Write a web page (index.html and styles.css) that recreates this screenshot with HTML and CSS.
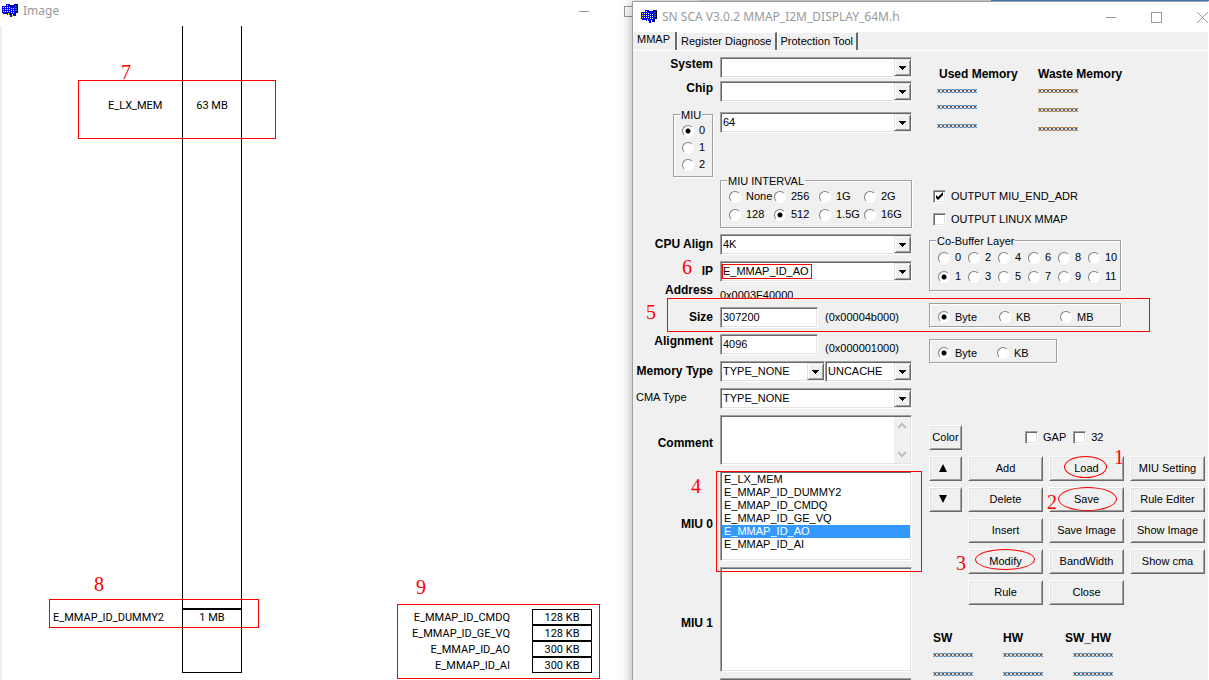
FILE: index.html
```html
<!DOCTYPE html>
<html lang="en">
<head>
<meta charset="utf-8">
<title>SN SCA</title>
<link rel="stylesheet" href="styles.css">
</head>
<body>
<svg class="defs" aria-hidden="true">
  <symbol id="app" viewBox="0 0 16 14" shape-rendering="crispEdges">
    <path fill="#000080" d="M4 0h4v1h4v-1h4v9h-2v3h-4v1H8v-2H6v-1H4v-1H0V2h4z"/>
    <path fill="#0000ff" d="M4 0h4v2h4v-1h2v8h-1v3h-2v-2h-1v3H8v-2H7v-1H6v1H5v-1H1V8H0V2h4z"/>
    <path fill="#fff" d="M3 3h1v1H3zM3 5h1v1H3zM3 7h1v1H3zM5 1h1v1H5zM5 3h1v1H5zM7 3h1v1H7zM5 5h1v1H5zM5 7h1v1H5zM9 4h1v1H9zM11 4h1v1h-1zM9 6h1v1H9zM11 6h1v1h-1zM9 8h1v1H9zM11 8h1v1h-1zM7 5h1v1H7zM7 7h1v1H7z"/>
    <path fill="#ff0" d="M1 3h1v1H1zM1 5h1v1H1zM1 7h1v1H1zM6 9h1v2H6zM10 10h1v3h-1z"/>
    <path fill="#008080" d="M13 2h2v1h-2zM13 4h2v1h-2zM13 6h2v1h-2z"/>
    <path d="M15 1h1v8h-1zM13 9h1v3h-1zM4 9h1v1H4zM8 2h1v1H8z"/>
  </symbol>
  <symbol id="down" viewBox="0 0 7 4" shape-rendering="crispEdges"><path d="M0 0h7v1H6v1H5v1H4v1H3V3H2V2H1V1H0z"/></symbol>
</svg>
<div class="desktop">
  <section class="window image-window">
    <header class="titlebar">
      <svg class="app-icon"><use href="#app"/></svg><span class="title">Image</span>
      <span class="min"></span><span class="max"></span>
    </header>
    <div class="canvas">
      <div class="memory-bar"><div class="slot big">63 MB</div><div class="slot small">1 MB</div></div>
      <span class="block-name name-lx">E_LX_MEM</span>
      <span class="block-name name-dummy">E_MMAP_ID_DUMMY2</span>
      <table class="blocks">
        <tr><th>E_MMAP_ID_CMDQ</th><td>128 KB</td></tr>
        <tr><th>E_MMAP_ID_GE_VQ</th><td>128 KB</td></tr>
        <tr><th>E_MMAP_ID_AO</th><td>300 KB</td></tr>
        <tr><th>E_MMAP_ID_AI</th><td>300 KB</td></tr>
      </table>
    </div>
  </section>

  <section class="window main-window">
    <header class="titlebar">
      <svg class="app-icon"><use href="#app"/></svg><span class="title">SN SCA V3.0.2 MMAP_I2M_DISPLAY_64M.h</span>
      <span class="controls"><span class="min"></span><span class="max"></span><svg class="close" viewBox="0 0 11 11"><path d="M0 0l11 11M11 0L0 11"/></svg></span>
    </header>
    <nav class="tabs">
      <button class="tab active">MMAP</button><button class="tab">Register Diagnose</button><button class="tab">Protection Tool</button>
    </nav>
    <form class="panel">
      <div class="form">
        <div class="row"><label for="system">System</label><span class="combo"><select id="system"><option></option></select><i><svg><use href="#down"/></svg></i></span></div>
        <div class="row chip"><label for="chip">Chip</label><span class="combo"><select id="chip"><option></option></select><i><svg><use href="#down"/></svg></i></span></div>
        <div class="row miu-row">
          <fieldset class="group miu"><legend>MIU</legend>
            <label><input type="radio" name="miu" checked>0</label>
            <label><input type="radio" name="miu">1</label>
            <label><input type="radio" name="miu">2</label>
          </fieldset>
          <span class="combo"><select aria-label="MIU size"><option>64</option></select><i><svg><use href="#down"/></svg></i></span>
        </div>
        <div class="row interval-row">
          <fieldset class="group interval"><legend>MIU INTERVAL</legend>
            <label><input type="radio" name="iv">None</label><label><input type="radio" name="iv">256</label><label><input type="radio" name="iv">1G</label><label><input type="radio" name="iv">2G</label>
            <label><input type="radio" name="iv">128</label><label><input type="radio" name="iv" checked>512</label><label><input type="radio" name="iv">1.5G</label><label><input type="radio" name="iv">16G</label>
          </fieldset>
        </div>
        <div class="row middle"><label for="cpu">CPU Align</label><span class="combo"><select id="cpu"><option>4K</option></select><i><svg><use href="#down"/></svg></i></span></div>
        <div class="row middle"><label for="ip">IP</label><span class="combo"><select id="ip"><option>E_MMAP_ID_AO</option></select><i><svg><use href="#down"/></svg></i></span></div>
        <div class="row address"><label for="address">Address</label><output id="address">0x0003F40000</output></div>
        <div class="row middle size"><label for="size">Size</label><input class="text" id="size" value="307200"><span class="hex">(0x00004b000)</span></div>
        <div class="row"><label for="align">Alignment</label><input class="text" id="align" value="4096"><span class="hex low">(0x000001000)</span></div>
        <div class="row middle"><label for="mem">Memory Type</label><span class="combo"><select id="mem"><option>TYPE_NONE</option></select><i><svg><use href="#down"/></svg></i></span><span class="combo cache"><select aria-label="Cache"><option>UNCACHE</option></select><i><svg><use href="#down"/></svg></i></span></div>
        <div class="row"><label class="plain" for="cma">CMA Type</label><span class="combo"><select id="cma"><option>TYPE_NONE</option></select><i><svg><use href="#down"/></svg></i></span></div>
        <div class="row comment"><label for="comment">Comment</label><span class="memo"><textarea id="comment"></textarea><span class="scroll"><svg viewBox="0 0 8 7"><path d="M0 6l4-4 4 4"/></svg><svg viewBox="0 0 8 7"><path d="M0 1l4 4 4-4"/></svg></span></span></div>
        <div class="row list-row"><span class="list-name" id="miu0">MIU 0</span><ul class="list" aria-labelledby="miu0"><li>E_LX_MEM</li><li>E_MMAP_ID_DUMMY2</li><li>E_MMAP_ID_CMDQ</li><li>E_MMAP_ID_GE_VQ</li><li class="selected">E_MMAP_ID_AO</li><li>E_MMAP_ID_AI</li></ul></div>
        <div class="row list-row tall"><span class="list-name" id="miu1">MIU 1</span><ul class="list" aria-labelledby="miu1"></ul></div>
        <div class="row list-row"><span class="list-name"></span><ul class="list"></ul></div>
      </div>
      <div class="side">
        <div class="usage">
          <div class="used"><b>Used Memory</b><span>xxxxxxxxxx</span><span>xxxxxxxxxx</span><span>xxxxxxxxxx</span></div>
          <div class="waste"><b>Waste Memory</b><span>xxxxxxxxxx</span><span>xxxxxxxxxx</span><span>xxxxxxxxxx</span></div>
        </div>
        <div class="outputs">
          <label><input type="checkbox" checked>OUTPUT MIU_END_ADR</label>
          <label><input type="checkbox">OUTPUT LINUX MMAP</label>
        </div>
        <fieldset class="group layer"><legend>Co-Buffer Layer</legend>
          <label><input type="radio" name="cb">0</label><label><input type="radio" name="cb">2</label><label><input type="radio" name="cb">4</label><label><input type="radio" name="cb">6</label><label><input type="radio" name="cb">8</label><label><input type="radio" name="cb">10</label>
          <label><input type="radio" name="cb" checked>1</label><label><input type="radio" name="cb">3</label><label><input type="radio" name="cb">5</label><label><input type="radio" name="cb">7</label><label><input type="radio" name="cb">9</label><label><input type="radio" name="cb">11</label>
        </fieldset>
        <fieldset class="group units"><label><input type="radio" name="u" checked>Byte</label><label><input type="radio" name="u">KB</label><label><input type="radio" name="u">MB</label></fieldset>
        <fieldset class="group units narrow"><label><input type="radio" name="a" checked>Byte</label><label><input type="radio" name="a">KB</label></fieldset>
        <div class="options"><button type="button" class="btn">Color</button><label><input type="checkbox">GAP</label><label><input type="checkbox">32</label></div>
        <div class="actions">
          <button type="button" class="btn arrow" aria-label="Up"><svg viewBox="0 0 8 8"><path d="M4 0l4 8H0z"/></svg></button><button type="button" class="btn">Add</button><button type="button" class="btn">Load</button><button type="button" class="btn">MIU Setting</button>
          <button type="button" class="btn arrow" aria-label="Down"><svg viewBox="0 0 8 8"><path d="M4 8l4-8H0z"/></svg></button><button type="button" class="btn">Delete</button><button type="button" class="btn">Save</button><button type="button" class="btn">Rule Editer</button>
          <span></span><button type="button" class="btn">Insert</button><button type="button" class="btn">Save Image</button><button type="button" class="btn">Show Image</button>
          <span></span><button type="button" class="btn">Modify</button><button type="button" class="btn">BandWidth</button><button type="button" class="btn">Show cma</button>
          <span></span><button type="button" class="btn">Rule</button><button type="button" class="btn">Close</button>
        </div>
        <div class="totals">
          <div><b>SW</b><span>xxxxxxxxxx</span><span>xxxxxxxxxx</span></div>
          <div><b>HW</b><span>xxxxxxxxxx</span><span>xxxxxxxxxx</span></div>
          <div class="both"><b>SW_HW</b><span>xxxxxxxxxx</span><span>xxxxxxxxxx</span></div>
        </div>
      </div>
    </form>
  </section>

  <div class="mark m7"></div><div class="mark m8"></div><div class="mark m9"></div>
  <div class="mark m6"></div><div class="mark m5"></div><div class="mark m4"></div>
  <div class="mark oval m1"></div><div class="mark oval m2"></div><div class="mark oval m3"></div>
  <span class="num n1">1</span><span class="num n2">2</span><span class="num n3">3</span>
  <span class="num n4">4</span><span class="num n5">5</span><span class="num n6">6</span>
  <span class="num n7">7</span><span class="num n8">8</span><span class="num n9">9</span>
</div>
</body>
</html>
```

FILE: styles.css
```css
* { box-sizing: border-box; }
body {
  margin: 0;
  overflow: hidden;
  font: 11px/13px "Liberation Sans", Arial, sans-serif;
  color: #000;
}
button, input, select, textarea { font: inherit; color: inherit; margin: 0; }
fieldset { margin: 0; padding: 0; min-width: 0; }
.defs { position: absolute; width: 0; height: 0; }
.desktop {
  position: relative;
  height: 100vh;
  overflow: hidden;
  background: linear-gradient(90deg, #e4e4e4 991px, #4a86d8 991px);
}

/* windows */
.window { position: absolute; bottom: 0; display: flex; flex-direction: column; background: #fff; }
.image-window { left: 0; top: 0; width: 698px; }
.main-window {
  left: 632px; top: 1px; right: 0; bottom: -20px;
  border: 1px solid #a0a0a0;
  border-right-color: #fff;
  background: #f0f0f0;
  box-shadow: 0 0 12px rgba(0, 0, 0, .35);
}
.titlebar {
  display: flex;
  align-items: center;
  height: 30px;
  background: #fff;
  color: #999;
  font: 12px/16px "Noto Sans", "Open Sans", sans-serif;
}
.main-window .titlebar { padding-left: 8px; flex: none; }
.image-window .titlebar { height: 26px; padding: 0 0 4px 2px; flex: none; }
.image-window .titlebar .min { margin-left: 520px; }
.image-window .titlebar .max { margin-left: 35px; }
.app-icon { width: 16px; height: 14px; margin-right: 5px; }
.controls { display: flex; align-items: center; gap: 35px; margin-left: auto; }
.min { width: 10px; height: 1px; background: #999; }
.max { width: 11px; height: 11px; border: 1px solid #999; }
.close { width: 11px; height: 11px; stroke: #999; }

/* memory map */
.canvas {
  position: relative;
  flex: 1;
  border-left: 2px solid #f0f0f0;
  font: 11px/13px Roboto, sans-serif;
}
.memory-bar {
  position: absolute;
  left: 180px; top: 0; bottom: 7px;
  width: 60px;
  border: 1px solid #000;
  border-top: 0;
  text-align: center;
}
.slot { position: absolute; left: 0; right: 0; }
.big { top: 73px; }
.small { top: 582px; padding-top: 1px; border-top: 2px solid #000; }
.block-name { position: absolute; }
.name-lx { left: 106px; top: 73px; }
.name-dummy { left: 51px; top: 585px; }
.blocks { position: absolute; right: 106px; top: 583px; border-spacing: 0; }
.blocks th { padding: 0 22px 0 0; font-weight: 400; text-align: right; }
.blocks td { width: 60px; height: 16px; padding: 0; border: 1px solid #000; text-align: center; }

/* tabs */
.tabs { display: flex; flex: none; height: 19px; border-bottom: 1px solid #fff; }
.tab { padding: 0 3px; border: 0; border-right: 2px solid #696969; background: none; white-space: nowrap; }
.tab + .tab { border-left: 1px solid #fff; border-top: 1px solid #fff; }
.tab.active { padding: 0 5px 3px 4px; }

/* form */
.panel { display: flex; flex: 1; margin: 0; }
.form { display: flex; flex-direction: column; gap: 6px; flex: none; width: 279px; padding-top: 6px; }
.row { display: flex; min-height: 21px; }
.row > label, .list-name { width: 80px; margin-right: 7px; flex: none; text-align: right; font-size: 12px; font-weight: 700; }
.row > label { padding-top: 1px; }
.row > label.plain { padding-left: 3px; padding-top: 3px; text-align: left; font-size: 11px; font-weight: 400; }
.row.chip { margin-top: -3px; }
.miu-row { margin-top: 4px; height: 65px; }
.interval-row { margin: -3px 0 0 87px; }
.row.middle > label { padding-top: 4px; }
.address { min-height: 15px; margin-top: -4px; }
.row.address > label { padding-top: 0; }
.address output { height: 15px; padding-top: 5px; overflow: hidden; }
.row.size { margin-top: 2px; }
.hex { padding: 4px 0 0 7px; }
.hex.low { padding-top: 8px; }

.combo, .text, .memo, .list {
  border: 1px solid;
  border-color: #a0a0a0 #fff #fff #a0a0a0;
  background: #fff;
  box-shadow: inset 1px 1px #696969, inset -1px -1px #e3e3e3;
}
.combo { position: relative; display: flex; flex: 1; height: 21px; }
.combo.cache { flex: none; width: 87px; }
.combo select { appearance: none; flex: 1; width: 0; border: 0; padding: 0 18px 1px 2px; background: none; outline: 0; }
.combo i {
  position: absolute;
  right: 0; top: 1px; bottom: 1px;
  display: flex; align-items: center; justify-content: center;
  width: 17px;
  border: 1px solid;
  border-color: #e3e3e3 #696969 #696969 #e3e3e3;
  background: #f0f0f0;
  box-shadow: inset 1px 1px #fff, inset -1px -1px #a0a0a0;
  pointer-events: none;
}
.combo i svg { width: 7px; height: 4px; }
.text { width: 98px; height: 21px; padding: 0 2px 1px; outline: 0; }
.comment { height: 50px; }
.row.comment > label { padding-top: 22px; }
.memo { display: flex; flex: 1; padding: 1px; }
.memo textarea { flex: 1; width: 0; border: 0; background: none; resize: none; outline: 0; }
.scroll { display: flex; flex-direction: column; justify-content: space-between; align-items: center; width: 16px; padding: 5px 0; background: #f0f0f0; }
.scroll svg { width: 8px; height: 7px; fill: none; stroke: #bbb; stroke-width: 2; }
.list-row { height: 90px; flex: none; }
.list-row.tall { height: 105px; }
.list-name { align-self: center; padding-top: 16px; }
.tall .list-name { padding-top: 7px; }
.list { flex: 1; margin: 0; padding: 1px; list-style: none; }
.list li { padding-left: 2px; }
.list .selected { background: #3399ff; color: #fff; }

/* groups */
.group { position: relative; border: 1px solid #a0a0a0; box-shadow: 1px 1px #fff, inset 1px 1px #fff; }
.group legend { position: absolute; top: -6px; left: 6px; padding: 0 1px; background: #f0f0f0; }
.group label, .outputs label, .options label { display: flex; align-items: center; white-space: nowrap; }
.miu { display: flex; flex-direction: column; gap: 4px; width: 40px; margin: 2px 7px 0 40px; padding: 9px 0 0 8px; }
.miu label { gap: 5px; }
.interval { display: grid; grid-template-columns: repeat(4, 45px); align-content: start; row-gap: 5px; width: 192px; height: 48px; padding: 9px 0 0 8px; }
.interval label { gap: 5px; }
input[type="radio"] {
  appearance: none;
  flex: none;
  width: 12px; height: 12px;
  border: 1px solid;
  border-color: #808080 #fff #fff #808080;
  border-radius: 50%;
  background: #fff;
}
input[type="radio"]:checked { background: radial-gradient(circle, #000 2px, #fff 3px); }
input[type="checkbox"] {
  appearance: none;
  flex: none;
  width: 13px; height: 13px;
  border: 1px solid;
  border-color: #a0a0a0 #fff #fff #a0a0a0;
  background: #fff;
  box-shadow: inset 1px 1px #696969, inset -1px -1px #e3e3e3;
}
input[type="checkbox"]:checked {
  background: #fff url("data:image/svg+xml,%3Csvg xmlns='http://www.w3.org/2000/svg' viewBox='0 0 11 11'%3E%3Cpath d='M2 4v3l2 2 5-5V1L4 6z'/%3E%3C/svg%3E") center / 11px 11px;
}

/* right side */
.side { flex: 1; min-width: 0; padding: 17px 3px 0 17px; }
.usage { display: flex; height: 122px; }
.usage div, .totals div { display: flex; flex-direction: column; }
.usage b, .totals b { height: 13px; font-size: 12px; white-space: nowrap; }
.usage span, .totals span { font-size: 8px; line-height: 8px; }
.used { width: 101px; padding-left: 8px; }
.used b { padding-left: 2px; }
.used span:nth-child(2), .waste span:nth-child(2) { margin-top: 6px; }
.used span:nth-child(3) { margin-top: 8px; }
.used span:nth-child(4), .waste span:nth-child(n+3) { margin-top: 11px; }
.waste { padding-left: 8px; }
.outputs { display: flex; flex-direction: column; gap: 10px; padding-left: 4px; }
.outputs label, .options label { gap: 5px; }
.layer { display: grid; grid-template-columns: repeat(6, 30px); align-content: start; row-gap: 6px; width: 192px; height: 51px; margin-top: 14px; padding: 10px 0 0 8px; }
.layer label, .units label { gap: 5px; }
.units { display: grid; grid-template-columns: repeat(3, 61px); align-items: center; width: 192px; height: 24px; margin-top: 12px; padding: 4px 0 0 8px; }
.units.narrow { grid-template-columns: repeat(2, 59px); width: 128px; }
.options { display: flex; align-items: center; height: 25px; margin-top: 62px; }
.options .btn { width: 33px; margin-right: 63px; }
.options label + label { margin-left: 7px; }
.btn {
  height: 25px;
  padding: 0;
  border: 1px solid;
  border-color: #fff #696969 #696969 #fff;
  background: #f0f0f0;
  box-shadow: inset 1px 1px #e3e3e3, inset -1px -1px #a0a0a0;
  white-space: nowrap;
}
.btn.arrow { padding-right: 5px; }
.arrow svg { width: 8px; height: 8px; }
.actions { display: grid; grid-template-columns: 33px 1fr 1fr 1fr; gap: 6px; margin-top: 6px; }
.totals { display: flex; gap: 30px; margin: 27px 0 0 4px; }
.totals b { margin-bottom: 6px; }
.totals span + span { margin-top: 11px; }
.both b { margin-left: -8px; }

/* annotations */
.mark { position: absolute; border: 1px solid #f00; pointer-events: none; }
.oval { border-radius: 50%; }
.m7 { left: 78px; top: 80px; width: 198px; height: 59px; }
.m8 { left: 49px; top: 599px; width: 210px; height: 29px; }
.m9 { left: 397px; top: 604px; width: 203px; height: 75px; }
.m6 { left: 722px; top: 264px; width: 90px; height: 15px; }
.m5 { left: 667px; top: 298px; width: 483px; height: 34px; }
.m4 { left: 716px; top: 471px; width: 206px; height: 101px; }
.m1 { left: 1064px; top: 456px; width: 43px; height: 22px; }
.m2 { left: 1058px; top: 487px; width: 59px; height: 24px; }
.m3 { left: 975px; top: 549px; width: 60px; height: 21px; }
.num { position: absolute; font: 20px/20px "Liberation Serif", serif; color: #f00; }
.n1 { left: 1114px; top: 447px; }
.n2 { left: 1047px; top: 492px; }
.n3 { left: 956px; top: 553px; }
.n4 { left: 691px; top: 476px; }
.n5 { left: 646px; top: 302px; }
.n6 { left: 682px; top: 257px; }
.n7 { left: 121px; top: 62px; }
.n8 { left: 94px; top: 574px; }
.n9 { left: 416px; top: 577px; }
```
